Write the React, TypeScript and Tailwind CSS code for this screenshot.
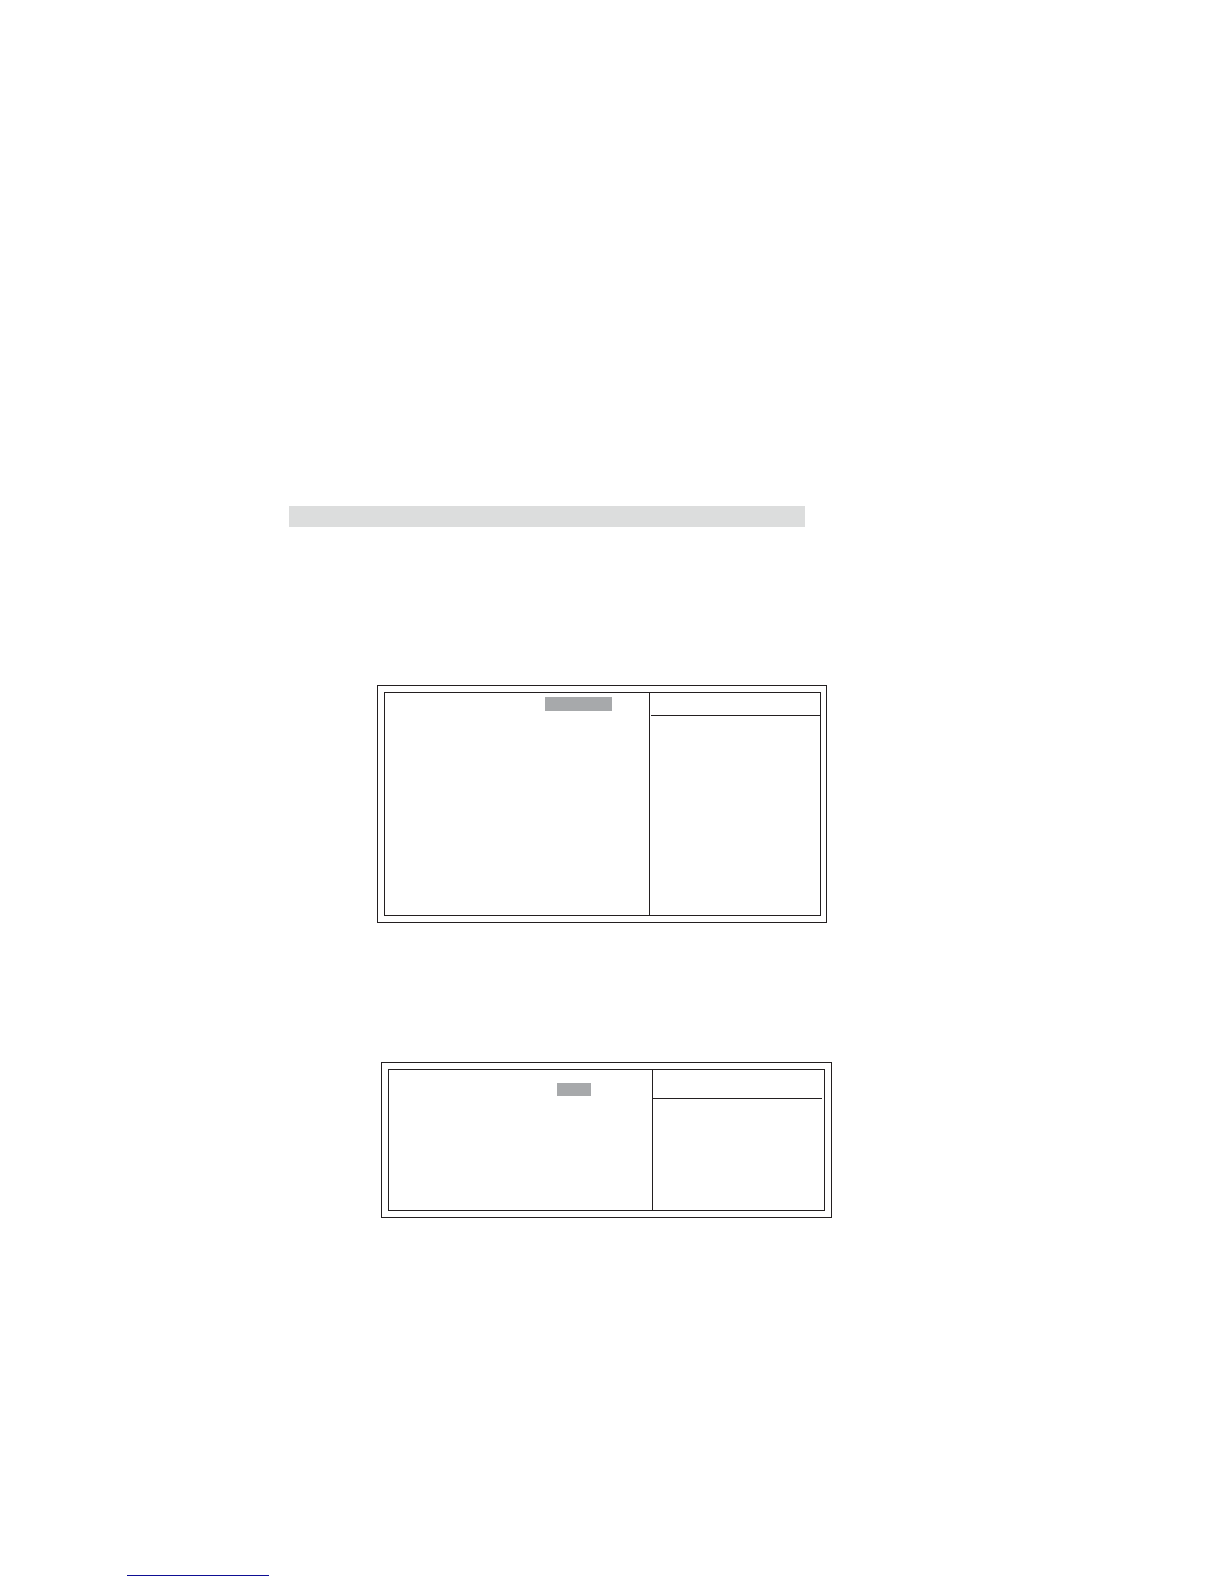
import clsx from "clsx";

type SetupPanelProps = {
  className: string;
  bodyClassName: string;
  listClassName: string;
  selectionClassName: string;
  helpTitleClassName: string;
};

// Double-framed setup screen: option list on the left, item help on the right
function SetupPanel({
  className,
  bodyClassName,
  listClassName,
  selectionClassName,
  helpTitleClassName,
}: SetupPanelProps) {
  return (
    <section className={clsx("w-full border border-[#231f20]", className)}>
      <div className={clsx("flex border border-[#231f20]", bodyClassName)}>
        <div className={clsx("shrink-0 border-r border-[#231f20]", listClassName)}>
          <div className={clsx("bg-[#a7a9ab]", selectionClassName)} />
        </div>
        <div className="flex-1">
          <div className={clsx("border-b border-[#231f20]", helpTitleClassName)} />
        </div>
      </div>
    </section>
  );
}

export default function App() {
  return (
    <div className="flex min-h-screen flex-col bg-white pt-[506px] pb-2">
      <main className="flex flex-col pl-[289px]">
        {/* Section heading band */}
        <div className="h-[21px] w-full max-w-[516px] bg-[#dcdddd]" />

        <SetupPanel
          className="mt-[158px] ml-[88px] max-w-[450px] py-1.5 pr-[5px] pl-1.5"
          bodyClassName="min-h-56"
          listClassName="w-[265px] pt-1 pl-40"
          selectionClassName="h-3.5 w-[67px]"
          helpTitleClassName="ml-px h-[23px]"
        />

        <SetupPanel
          className="mt-[139px] ml-[92px] max-w-[451px] p-1.5"
          bodyClassName="min-h-[142px]"
          listClassName="w-[264px] pt-[13px] pl-[168px]"
          selectionClassName="h-[13px] w-[34px]"
          helpTitleClassName="mr-0.5 h-[29px]"
        />
      </main>

      <footer className="mt-auto pl-[127px]">
        <a href="#" className="block h-px w-[142px] bg-[#0e0e94]" />
      </footer>
    </div>
  );
}
